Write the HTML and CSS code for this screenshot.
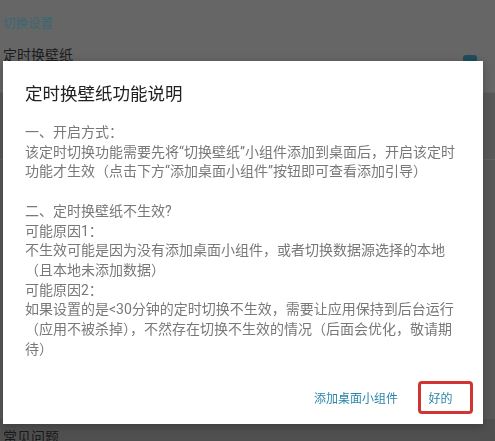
FILE: index.html
```html
<!DOCTYPE html>
<html lang="zh-CN">
<head>
  <meta charset="UTF-8">
  <meta name="viewport" content="width=device-width, initial-scale=1.0">
  <title>切换设置</title>
  <link rel="stylesheet" href="styles.css">
</head>
<body>

  <!-- Settings page behind the dialog (dimmed) -->
  <div class="settings">
    <div class="group-top">
      <div class="group-title">切换设置</div>
      <div class="setting-row">
        <span>定时换壁纸</span>
        <span class="toggle"></span>
      </div>
    </div>
    <div class="group-rest">
      <div class="divider"></div>
      <div class="divider"></div>
    </div>
    <div class="setting-row faq">常见问题</div>
  </div>

  <!-- Dialog -->
  <div class="overlay">
    <div class="dialog">
      <h2 class="dialog-title">定时换壁纸功能说明</h2>
      <div class="dialog-body">
        <p>一、开启方式：<br>
        该定时切换功能需要先将“切换壁纸”小组件添加到桌面后，开启该定时<br>
        功能才生效（点击下方“添加桌面小组件”按钮即可查看添加引导）</p>
        <p>二、定时换壁纸不生效?<br>
        可能原因1：<br>
        不生效可能是因为没有添加桌面小组件，或者切换数据源选择的本地<br>
        （且本地未添加数据）<br>
        可能原因2：<br>
        如果设置的是&lt;30分钟的定时切换不生效，需要让应用保持到后台运行<br>
        （应用不被杀掉），不然存在切换不生效的情况（后面会优化，敬请期<br>
        待）</p>
      </div>
      <div class="dialog-actions">
        <button class="action">添加桌面小组件</button>
        <button class="action action-ok">好的</button>
      </div>
    </div>
  </div>

</body>
</html>
```

FILE: styles.css
```css
body {
  margin: 0;
  width: 495px;
  height: 441px;
  overflow: hidden;
  font-family: Roboto, "Noto Sans CJK SC", sans-serif;
  background-color: #585858;
}

/* page behind */
.settings {
  display: flex;
  flex-direction: column;
  height: 441px;
}

.group-top {
  background-color: #666;
  height: 92px;
}

.group-title {
  color: #3a6874;
  font-size: 12.5px;
  padding: 16px 0 0 3px;
  line-height: 16px;
}

.setting-row {
  display: flex;
  justify-content: space-between;
  align-items: center;
  padding: 0 18px 0 3px;
  margin-top: 13px;
  font-size: 14px;
  color: #1c1c1c;
  line-height: 20px;
}

.toggle {
  width: 14px;
  height: 8px;
  margin-top: 8px;
  border-radius: 3px;
  background-color: #1f4d5c;
}

.group-rest {
  flex: 1;
  background-color: #585858;
}

.divider {
  height: 1px;
  background-color: #626262;
  margin-bottom: 66px;
}

.faq {
  background-color: #4f4f4f;
  margin-top: 0;
  padding-top: 8px;
  height: 14px;
  overflow: hidden;
  align-items: flex-start;
  color: #1a1a1a;
}

/* dialog */
.overlay {
  position: fixed;
  top: 0;
  left: 0;
  right: 0;
  bottom: 0;
  display: flex;
  align-items: flex-start;
  padding: 61px 0 0 3px;
}

.dialog {
  width: 480px;
  background-color: #fff;
  box-shadow: 0 2px 8px rgba(0, 0, 0, 0.25);
  padding: 21px 10px 10px 22px;
  box-sizing: border-box;
}

.dialog-title {
  margin: 0;
  font-size: 17.5px;
  font-weight: normal;
  line-height: 24px;
  color: #212121;
}

.dialog-body {
  margin-top: 17px;
  font-size: 14px;
  line-height: 19.7px;
  color: #787878;
}

.dialog-body p {
  margin: 0 0 19.7px;
}

.dialog-body p:last-child {
  margin-bottom: 0;
}

.dialog-actions {
  display: flex;
  justify-content: flex-end;
  align-items: center;
  margin-top: 21.5px;
}

.action {
  font-family: inherit;
  font-size: 12px;
  color: #2a86a8;
  background: none;
  border: none;
  padding: 0;
  height: 33px;
  margin-right: 20px;
  cursor: pointer;
}

.action-ok {
  margin-right: 0;
  width: 55px;
  padding: 0 17px 0 7px;
  border: 3px solid #d23431;
  border-radius: 4px;
}
```
